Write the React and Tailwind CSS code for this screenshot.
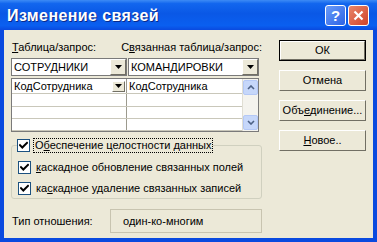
import React from "react";

const Check = () => (
  <span className="w-[13px] h-[13px] bg-white border border-[#1C5180] flex items-center justify-center shrink-0">
    <svg width="9" height="9" viewBox="0 0 9 9">
      <path d="M1 4.2 L3.3 6.5 L8 1.8" stroke="#000" strokeWidth="2" fill="none" strokeLinecap="square" />
    </svg>
  </span>
);

const DropBtn = ({ small }) => (
  <span
    className={`${small ? "w-[13px] h-[11px]" : "w-[16px] h-[16px]"} bg-[#ECE9D8] border border-t-white border-l-white border-r-[#716F64] border-b-[#716F64] flex items-center justify-center shrink-0`}
  >
    <svg width="7" height="4" viewBox="0 0 7 4">
      <path d="M0 0 H7 L3.5 4 Z" fill="#000" />
    </svg>
  </span>
);

const Combo = ({ w, text }) => (
  <div className={`${w} h-[18px] bg-white border border-[#7A7A7A] flex items-center pl-[2px]`}>
    <span className="flex-1 truncate">{text}</span>
    <DropBtn />
  </div>
);

const Btn = ({ children, def }) => (
  <button
    className={`w-[87px] h-[21px] bg-[#ECE9D8] flex items-center justify-center border ${
      def ? "border-black" : "border-t-white border-l-white border-r-[#716F64] border-b-[#716F64]"
    }`}
  >
    <span
      className={`w-full h-full flex items-center justify-center ${
        def ? "border border-t-white border-l-white border-r-[#716F64] border-b-[#716F64]" : ""
      }`}
    >
      {children}
    </span>
  </button>
);

const ScrollArrow = ({ up }) => (
  <span className="w-[15px] h-[15px] bg-[#C6D7FA] border border-[#B4C8F6] rounded-[2px] flex items-center justify-center">
    <svg width="8" height="5" viewBox="0 0 8 5">
      <path d={up ? "M1 4 L4 1 L7 4" : "M1 1 L4 4 L7 1"} stroke="#4D6185" strokeWidth="1.6" fill="none" />
    </svg>
  </span>
);

export default function App() {
  const rows = [15, 13, 12, 12];
  return (
    <div className="w-[377px] h-[242px] bg-[#0A4ADF] flex flex-col overflow-hidden text-[11px] leading-[13px] text-black font-['Liberation_Sans',Arial,sans-serif]">
      {/* title bar */}
      <div className="h-[30px] shrink-0 flex items-center pl-[7px] pr-[6px] bg-[linear-gradient(180deg,#3D8BF5_0%,#1266EE_12%,#0A58E6_45%,#0A5FF0_85%,#0A4ADF_100%)]">
        <span className="text-white font-bold text-[16px] tracking-[0.4px] [text-shadow:1px_1px_0_#0A2A8A]">
          Изменение связей
        </span>
        <div className="ml-auto mr-[2px] flex gap-[2px]">
          <span className="w-[21px] h-[21px] rounded-[3px] border border-white bg-[linear-gradient(135deg,#6A9CF8,#2C63E6)] text-white font-bold text-[15px] flex items-center justify-center">
            ?
          </span>
          <span className="w-[21px] h-[21px] rounded-[3px] border border-white bg-[linear-gradient(135deg,#E9866A,#D0432A)] flex items-center justify-center">
            <svg width="11" height="11" viewBox="0 0 11 11">
              <path d="M1.5 1.5 L9.5 9.5 M9.5 1.5 L1.5 9.5" stroke="#fff" strokeWidth="2.2" />
            </svg>
          </span>
        </div>
      </div>

      {/* body */}
      <div className="flex-1 mx-[4px] mb-[4px] bg-[#ECE9D8] flex">
        <div className="w-[251px] ml-[7px] pt-[11px] flex flex-col">
          <div className="flex h-[13px] items-center whitespace-nowrap">
            <span className="w-[117px] pl-[1px]">
              <u>Т</u>аблица/запрос:
            </span>
            <span>
              С<u>в</u>язанная таблица/запрос:
            </span>
          </div>

          <div className="flex gap-[1px] mt-[4px]">
            <Combo w="w-[116px]" text="СОТРУДНИКИ" />
            <Combo w="w-[131px]" text="КОМАНДИРОВКИ" />
          </div>

          {/* grid */}
          <div className="mt-[2px] w-[248px] h-[54px] bg-white border border-[#7A7A7A] flex">
            <div className="flex-1 flex flex-col">
              {rows.map((h, i) => (
                <div
                  key={i}
                  style={{ height: h }}
                  className="flex border-b border-[#C9C7BA]"
                >
                  <div className="w-[115px] border-r border-[#9C9A8E] flex items-center pl-[2px]">
                    {i === 0 && (
                      <>
                        <span className="flex-1">КодСотрудника</span>
                        <span className="mr-[1px]">
                          <DropBtn small />
                        </span>
                      </>
                    )}
                  </div>
                  <div className="flex-1 flex items-center pl-[2px]">
                    {i === 0 && "КодСотрудника"}
                  </div>
                </div>
              ))}
            </div>
            <div className="w-[16px] bg-[#F4F3EE] border-l border-[#E0DED4] flex flex-col justify-between items-center py-[1px]">
              <ScrollArrow up />
              <ScrollArrow />
            </div>
          </div>

          {/* group box */}
          <fieldset className="mt-[7px] w-[251px] border border-[#D0D0BF] rounded-[3px] pl-[6px] pb-[3px]">
            <legend className="-ml-[1px] pr-[1px]">
              <span className="flex items-center gap-[4px]">
                <Check />
                <span className="outline outline-1 outline-dotted outline-black px-[1px]">
                  О<u>б</u>еспечение целостности данных
                </span>
              </span>
            </legend>
            <div className="flex flex-col gap-[8px] mt-[9px]">
              <div className="flex items-center gap-[5px]">
                <Check />
                <span>
                  <u>к</u>аскадное обновление связанных полей
                </span>
              </div>
              <div className="flex items-center gap-[5px]">
                <Check />
                <span>
                  ка<u>с</u>кадное удаление связанных записей
                </span>
              </div>
            </div>
          </fieldset>

          <div className="mt-[10px] flex items-center">
            <span className="w-[99px] pl-[1px]">Тип отношения:</span>
            <div className="w-[152px] h-[24px] border border-[#C8C4B0] flex items-center pl-[12px]">
              один-ко-многим
            </div>
          </div>
        </div>

        <div className="ml-[17px] pt-[10px] flex flex-col gap-[9px]">
          <Btn def>ОК</Btn>
          <Btn>Отмена</Btn>
          <Btn>
            Объ<u>е</u>динение...
          </Btn>
          <Btn>
            <u>Н</u>овое..
          </Btn>
        </div>
      </div>
    </div>
  );
}
